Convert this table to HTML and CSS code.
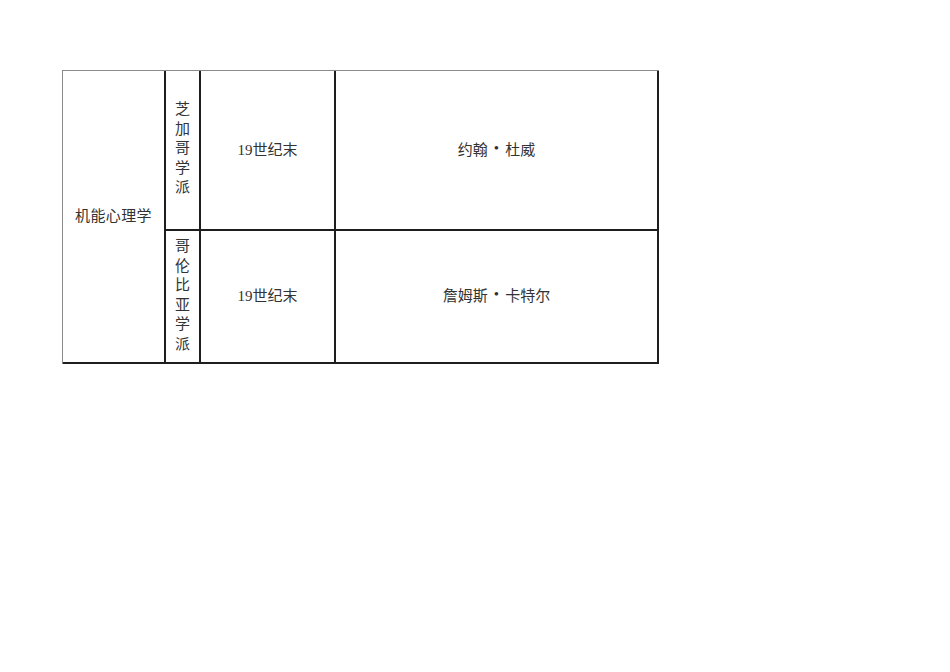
FILE: index.html
```html
<!DOCTYPE html>
<html>
<head>
<meta charset="utf-8">
<link rel="stylesheet" href="styles.css">
</head>
<body>
<div class="sheet">
  <div class="cell school">机能心理学</div>
  <div class="cell sub r1"><span class="vtext">芝加哥学派</span></div>
  <div class="cell r1">19世纪末</div>
  <div class="cell r1">约翰<span class="dot">•</span>杜威</div>
  <div class="cell sub r2"><span class="vtext">哥伦比亚学派</span></div>
  <div class="cell r2">19世纪末</div>
  <div class="cell r2">詹姆斯<span class="dot">•</span>卡特尔</div>
</div>
</body>
</html>
```
FILE: styles.css
```css
html, body {
  margin: 0;
  padding: 0;
  background: #ffffff;
}
.sheet {
  margin: 70px 0 0 62px;
  display: grid;
  grid-template-columns: 103px 35px 135px 323px;
  grid-template-rows: 160px 133px;
  width: max-content;
  border-top: 1px solid #8a8a8a;
  border-left: 1px solid #8a8a8a;
  font-family: "Liberation Serif", "Noto Sans CJK SC", serif;
  font-size: 15px;
  color: #333333;
}
.cell {
  box-sizing: border-box;
  border-right: 2px solid #1e1e1e;
  border-bottom: 2px solid #1e1e1e;
  padding-bottom: 4px;
  display: flex;
  align-items: center;
  justify-content: center;
  text-align: center;
  font-family: "Liberation Serif", "Noto Sans CJK SC", serif;
}
.school {
  grid-row: 1 / span 2;
  grid-column: 1;
  letter-spacing: 0.4px;
}
.sub {
  padding-bottom: 2px;
}
.vtext {
  display: block;
  width: 15px;
  line-height: 19.5px;
  word-break: break-all;
}
.dot {
  margin: 0 6px;
}
```
